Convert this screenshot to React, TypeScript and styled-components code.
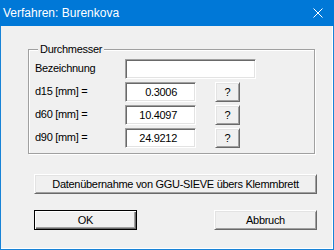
import React from 'react';
import styled, { createGlobalStyle } from 'styled-components';

const GlobalStyle = createGlobalStyle`
  html, body {
    margin: 0;
    padding: 0;
    background: #f0f0f0;
  }
  * {
    box-sizing: border-box;
  }
`;

const Window = styled.div`
  width: 334px;
  height: 250px;
  display: flex;
  flex-direction: column;
  border: 1px solid #1883d7;
  border-top: none;
  background: #f0f0f0;
  font-family: 'Liberation Sans', Arial, sans-serif;
  font-size: 11px;
  color: #000;
`;

const TitleBar = styled.div`
  height: 26px;
  flex: none;
  display: flex;
  align-items: center;
  justify-content: space-between;
  margin: 0 -1px;
  padding: 0 11px 1px 3px;
  background: #0078d7;
  color: #fff;
  font-size: 12px;
`;

const CloseIcon = () => (
  <svg width="10" height="10" viewBox="0 0 10 10">
    <path d="M0.5 0.5 L9.5 9.5 M9.5 0.5 L0.5 9.5" stroke="#fff" strokeWidth="1" />
  </svg>
);

const Body = styled.div`
  flex: 1;
  display: flex;
  flex-direction: column;
  align-items: flex-start;
  padding: 17px 0 0 27px;
  letter-spacing: -0.3px;
  box-shadow: inset -1px -1px 0 #fff;
`;

const Group = styled.fieldset`
  width: 287px;
  margin: 0;
  padding: 3px 0 5px 6px;
  border: 1px solid #a0a0a0;
  box-shadow: 1px 1px 0 #fff, inset 1px 1px 0 #fff;
`;

const Legend = styled.legend`
  margin-left: 3px;
  padding: 0 2px;
  line-height: 13px;
  background: #f0f0f0;
`;

const Rows = styled.div`
  display: grid;
  row-gap: 3px;
`;

const Row = styled.div`
  height: 20px;
  display: flex;
  align-items: center;
`;

const Label = styled.span`
  width: 90px;
  padding-bottom: 3px;
`;

const Field = styled.div<{ $width: number }>`
  width: ${(p) => p.$width}px;
  height: 20px;
  padding: 0 18px 0 3px;
  display: flex;
  align-items: center;
  justify-content: flex-end;
  background: #fff;
  border-top: 1px solid #a0a0a0;
  border-left: 1px solid #a0a0a0;
  border-right: 1px solid #fff;
  border-bottom: 1px solid #fff;
  box-shadow: inset 1px 1px 0 #696969, inset -1px -1px 0 #e3e3e3;
`;

const Button = styled.button<{ $width: number; $default?: boolean }>`
  width: ${(p) => p.$width}px;
  height: 20px;
  padding: 0;
  margin: 0;
  font-family: inherit;
  font-size: 11px;
  letter-spacing: inherit;
  color: #000;
  background: #f0f0f0;
  border-top: 1px solid ${(p) => (p.$default ? '#000' : '#fff')};
  border-left: 1px solid ${(p) => (p.$default ? '#000' : '#fff')};
  border-right: 1px solid ${(p) => (p.$default ? '#000' : '#696969')};
  border-bottom: 1px solid ${(p) => (p.$default ? '#000' : '#696969')};
  box-shadow: ${(p) =>
    p.$default
      ? 'inset 1px 1px 0 #fff, inset -1px -1px 0 #696969, inset -2px -2px 0 #a0a0a0'
      : 'inset 1px 1px 0 #e3e3e3, inset -1px -1px 0 #a0a0a0'};
`;

const HelpButton = styled(Button)`
  margin-left: 19px;
`;

const WideButton = styled(Button)`
  margin: 20px 0 0 6px;
`;

const Footer = styled.div`
  width: 283px;
  margin: 16px 0 0 6px;
  display: flex;
  justify-content: space-between;
`;

const values = [
  { label: 'd15 [mm] =', value: '0.3006' },
  { label: 'd60 [mm] =', value: '10.4097' },
  { label: 'd90 [mm] =', value: '24.9212' },
];

export default function App() {
  return (
    <>
      <GlobalStyle />
      <Window>
        <TitleBar>
          <span>Verfahren: Burenkova</span>
          <CloseIcon />
        </TitleBar>
        <Body>
          <Group>
            <Legend>Durchmesser</Legend>
            <Rows>
              <Row>
                <Label>Bezeichnung</Label>
                <Field $width={131} />
              </Row>
              {values.map((v) => (
                <Row key={v.label}>
                  <Label>{v.label}</Label>
                  <Field $width={71}>{v.value}</Field>
                  <HelpButton $width={25}>?</HelpButton>
                </Row>
              ))}
            </Rows>
          </Group>
          <WideButton $width={283}>Datenübernahme von GGU-SIEVE übers Klemmbrett</WideButton>
          <Footer>
            <Button $width={103} $default>OK</Button>
            <Button $width={103}>Abbruch</Button>
          </Footer>
        </Body>
      </Window>
    </>
  );
}
